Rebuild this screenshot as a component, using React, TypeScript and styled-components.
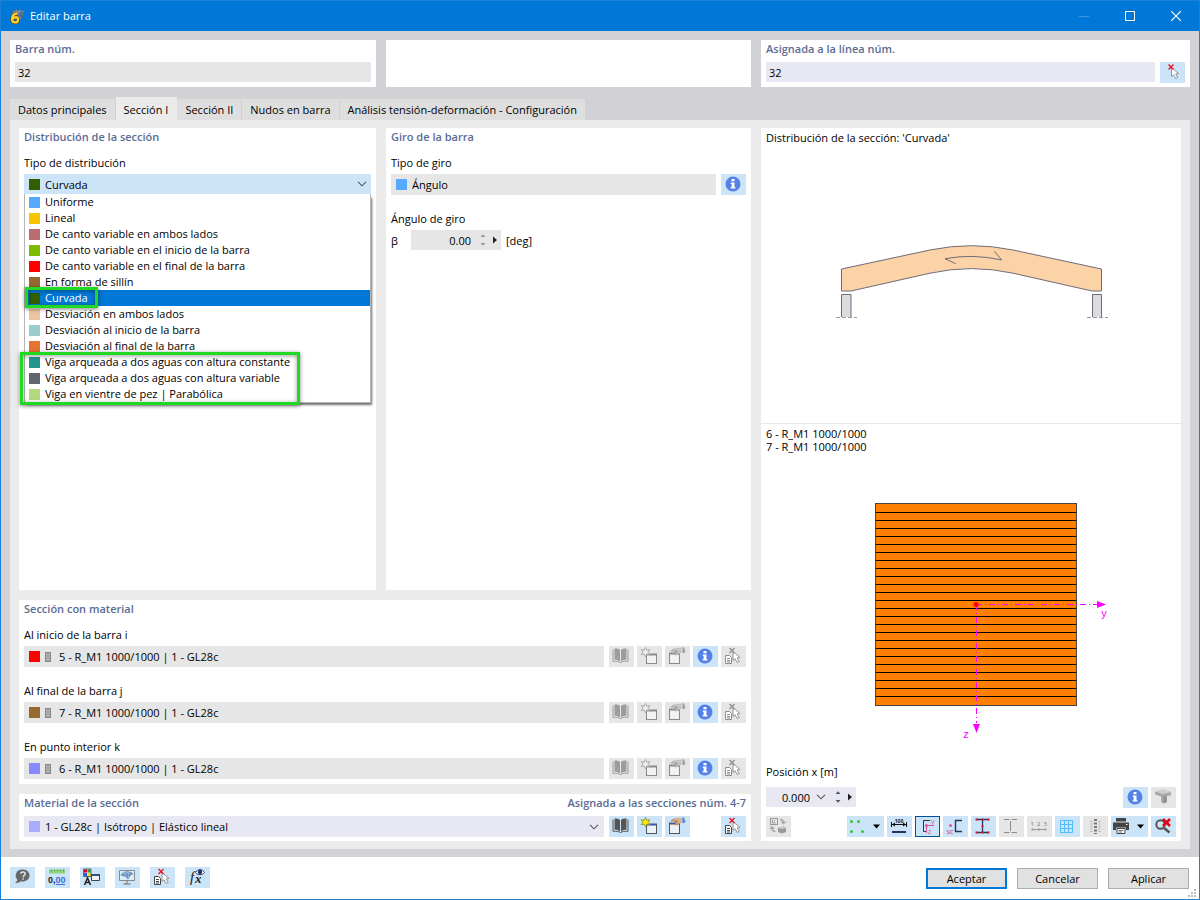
import React from "react";
import styled, { createGlobalStyle } from "styled-components";

const Global = createGlobalStyle`
  *, *::before, *::after { box-sizing: border-box; }
  body { margin: 0; background: #fff; }
  body, button, input, select {
    font-family: "Open Sans", "Noto Sans", sans-serif;
    font-size: 11px;
    color: #000;
  }
  h2, p, ul { margin: 0; padding: 0; }
`;

const Window = styled.div`
  display: flex;
  flex-direction: column;
  min-height: 100vh;
  border: 1px solid #1a7fd6;
  border-top: 0;
  background: #fff;
`;

const TitleBar = styled.header`
  display: flex;
  align-items: center;
  height: 31px;
  padding-left: 7px;
  background: #0078d7;
  border-top: 1px solid #1a84da;
  color: #fff;
`;

const WindowTitle = styled.span`
  flex: 1;
  margin-left: 5px;
  padding-bottom: 2px;
`;

const CaptionButton = styled.button`
  width: 46px;
  height: 30px;
  padding: 0;
  border: 0;
  background: transparent;
  display: flex;
  align-items: center;
  justify-content: center;
`;

const Body = styled.main`
  flex: 1;
  display: flex;
  flex-direction: column;
  padding: 9px 9px 8px;
  background: #d2d1d6;
`;

const HeaderRow = styled.div`
  display: grid;
  grid-template-columns: minmax(0, 366fr) minmax(0, 365fr) minmax(0, 429fr);
  gap: 10px;
`;

const Card = styled.section`
  background: #fff;
  padding: 0 5px 4px;
  min-width: 0;
`;

const CardTitle = styled.h2`
  display: flex;
  justify-content: space-between;
  font-size: 11px;
  font-weight: 600;
  line-height: 18px;
  color: #5b6c94;
  white-space: nowrap;
`;

const Row = styled.div<{ $top?: number }>`
  display: flex;
  align-items: flex-start;
  gap: 3px;
  margin-top: ${(p) => p.$top ?? 2}px;
`;

const Label = styled.label<{ $top?: number }>`
  display: block;
  margin-top: ${(p) => p.$top ?? 8}px;
  line-height: 18px;
`;

const Field = styled.div<{ $tone?: "grey" | "lilac" | "blue" }>`
  position: relative;
  flex: 1;
  min-width: 0;
  display: flex;
  align-items: center;
  gap: 5px;
  height: 21px;
  padding: 0 5px;
  margin-right: 2px;
  background: ${(p) => (p.$tone === "lilac" ? "#e8e8f2" : p.$tone === "blue" ? "#cce4f7" : "#e6e6e6")};
  &:last-child { margin-right: 0; }
`;

const PlainField = styled(Field)`
  height: 20px;
  padding: 0 3px;
`;

const TextInput = styled.input`
  flex: 1;
  min-width: 0;
  height: 20px;
  padding: 0;
  border: 0;
  outline: 0;
  background: transparent;
`;

const SelectInput = styled.select`
  flex: 1;
  min-width: 0;
  height: 20px;
  padding: 0;
  border: 0;
  outline: 0;
  appearance: none;
  background: transparent;
`;

const Swatch = styled.span<{ $color: string }>`
  flex: none;
  width: 11px;
  height: 11px;
  background: ${(p) => p.$color};
`;

const Profile = styled.span`
  flex: none;
  width: 6px;
  height: 10px;
  margin-right: 3px;
  border: 1px solid #8a8a8a;
  background: #a8a8a8;
`;

const ToolButton = styled.button<{ $off?: boolean; $active?: boolean; $wide?: boolean }>`
  flex: none;
  display: flex;
  width: ${(p) => (p.$wide ? 37 : 25)}px;
  height: 21px;
  padding: 0;
  border: 0;
  background: ${(p) => (p.$off ? "#e6e6e6" : "#cce4f7")};
  box-shadow: ${(p) => (p.$active ? "inset 0 0 0 1px #00529b" : "none")};
`;

const Spacer = styled.span<{ $width?: number }>`
  flex: ${(p) => (p.$width ? `0 0 ${p.$width}px` : "1")};
`;

const Tabs = styled.div`
  display: flex;
  align-items: flex-end;
  height: 23px;
  margin-top: 10px;
`;

const Tab = styled.button<{ $selected?: boolean }>`
  height: ${(p) => (p.$selected ? 23 : 21)}px;
  padding: ${(p) => (p.$selected ? "2px 8px 0" : "0 8px")};
  border: 0;
  border-right: 1px solid ${(p) => (p.$selected ? "#ebebeb" : "#d0d0d0")};
  background: ${(p) => (p.$selected ? "#ebebeb" : "#dedede")};
  white-space: nowrap;
`;

const TabPane = styled.div`
  flex: 1;
  display: grid;
  grid-template-columns: minmax(0, 732fr) minmax(420px, 420fr);
  gap: 10px;
  padding: 8px 9px;
  background: #ebebeb;
`;

const LeftColumn = styled.div`
  display: flex;
  flex-direction: column;
  gap: 10px;
  min-width: 0;
`;

const UpperCards = styled.div`
  flex: 1;
  display: grid;
  grid-template-columns: minmax(0, 357fr) minmax(0, 365fr);
  gap: 10px;
  min-height: 300px;
`;

const SectionCard = styled(Card)`
  padding-bottom: 5px;
`;

const Dropdown = styled.div`
  position: relative;
  margin-top: 2px;
`;

const DropdownField = styled(Field)`
  height: 20px;
  margin-right: 0;
  padding-right: 4px;
`;

const OptionList = styled.ul`
  position: absolute;
  z-index: 1;
  top: 20px;
  left: 0;
  right: 0;
  list-style: none;
  border: 1px solid #b5b5b5;
  border-top: 0;
  background: #fff;
  box-shadow: 2px 3px 2px -1px #707070;
`;

const Option = styled.li<{ $selected?: boolean }>`
  display: flex;
  align-items: center;
  gap: 5px;
  height: 16px;
  padding-left: 4px;
  line-height: 16px;
  white-space: nowrap;
  color: ${(p) => (p.$selected ? "#fff" : "#000")};
  background: ${(p) => (p.$selected ? "#0078d7" : "transparent")};
`;

const Highlight = styled.span<{ $x: number; $y: number; $w: number; $h: number }>`
  position: absolute;
  z-index: 2;
  left: ${(p) => p.$x}px;
  top: ${(p) => p.$y}px;
  width: ${(p) => p.$w}px;
  height: ${(p) => p.$h}px;
  border: 3px solid #1fd923;
  box-shadow: 0 1px 4px rgba(0, 0, 0, 0.5), inset 0 1px 4px rgba(0, 0, 0, 0.4);
`;

const AngleRow = styled.div`
  display: flex;
  align-items: center;
  gap: 5px;
  margin-top: 2px;
`;

const Symbol = styled.span`
  width: 15px;
`;

const Spinner = styled.div<{ $tone?: "lilac" }>`
  display: flex;
  align-items: center;
  width: 90px;
  height: 20px;
  background: ${(p) => (p.$tone ? "#e8e8f2" : "#e6e6e6")};
`;

const NumberInput = styled(TextInput)`
  text-align: right;
`;

const PreviewCard = styled(Card)`
  display: flex;
  flex-direction: column;
  padding: 0 0 4px;
`;

const Preview = styled.div`
  display: flex;
  flex-direction: column;
  height: 296px;
  border-bottom: 1px solid #e6e6e6;
`;

const SectionPreview = styled(Preview)`
  flex: 1;
  height: auto;
  min-height: 320px;
  border: 0;
`;

const PreviewText = styled.p`
  padding: 3px 5px 0;
  line-height: 13px;
`;

const Canvas = styled.div<{ $pad: string }>`
  flex: 1;
  display: flex;
  align-items: center;
  justify-content: center;
  padding: ${(p) => p.$pad};
`;

const PreviewTools = styled.div`
  padding: 0 5px;
`;

const Footer = styled.footer`
  position: relative;
  display: flex;
  align-items: flex-start;
  gap: 10px;
  height: 42px;
  padding: 10px 10px 0 9px;
`;

const DialogButtons = styled.div`
  display: flex;
  gap: 10px;
  padding-top: 1px;
`;

const DialogButton = styled.button<{ $primary?: boolean }>`
  width: 81px;
  height: 21px;
  padding: 0;
  border: ${(p) => (p.$primary ? "2px solid #0078d7" : "1px solid #adadad")};
  background: #e1e1e1;
`;

const Grip = styled.svg`
  position: absolute;
  right: 3px;
  bottom: 2px;
`;

const Icon = ({ w = 25, children }: { w?: number; children: React.ReactNode }) => (
  <svg width={w} height="21" viewBox={`0 0 ${w} 21`} fill="none" aria-hidden="true">
    {children}
  </svg>
);

const InfoIcon = () => (
  <Icon>
    <circle cx="12" cy="10" r="7.5" fill="#5580e6" />
    <path d="M10.5 5h3v2.3h-3zM9.8 8.6h3.7v4.6h1v1.4H9.6v-1.4h1V10h-.8z" fill="#fff" />
  </Icon>
);

const BookIcon = ({ off }: { off?: boolean }) => {
  const c = off ? "#9c9c9c" : "#555";
  return (
    <Icon>
      <path d="M5.500 2.500C8 2.300 10 2.800 11 4v11.500c-1.200-1.200-3-1.800-5.500-1.800zM12 4c1-1.200 3-1.700 5.500-1.500v11.200c-2.500 0-4.300.6-5.500 1.800z" fill={c} />
      <path d="M4 3.500v11.800c3.500-.2 5.500.2 7.500 1.200 2-1 4-1.400 7.500-1.200V3.500" stroke={c} />
    </Icon>
  );
};

const NewIcon = ({ off }: { off?: boolean }) => (
  <Icon>
    <rect x="9.500" y="8.500" width="10" height="9" fill={off ? "#f2f2f2" : "#eaf1f8"} stroke={off ? "#8a8a8a" : "#555"} />
    <path d="M9 8.500h11" stroke={off ? "#8a8a8a" : "#555"} strokeWidth="2" />
    {!off && <path d="M11 8.500h8" stroke="#3355dd" />}
    <path d="M8.500 1.500l1.200 2.700 3.300-.4-2.100 2.300 2 2.500-3.200-.4-1.200 2.600-1.200-2.600-3.200.4 2-2.500L4 3.800l3.300.4z" fill={off ? "#eee" : "#ffee00"} stroke={off ? "#9a9a9a" : "#8b8b1d"} strokeWidth=".8" />
  </Icon>
);

const EditIcon = ({ off }: { off?: boolean }) => {
  const line = off ? "#8a8a8a" : "#555";
  return (
    <Icon>
      <rect x="4.500" y="7.500" width="10" height="10" fill={off ? "#f2f2f2" : "#eaf1f8"} stroke={line} />
      <path d="M4 7.500h11" stroke={line} strokeWidth="2" />
      {!off && <path d="M5.500 7.500h4" stroke="#3355dd" />}
      <path d="M5 5l4-2.300 3.500-1h4.500v5l-2.500.8-1 1.500-1.300-.3-1.200 1-1.300-.7.500-2.500-2.500.3-.5-1.300z" fill={off ? "#c4c4c4" : "#dcae8c"} />
      <path d="M6 5l3.500-2M10 9l.8-2.500 2.200-1M12.500 9l1-2M9 5.800l3-1" stroke={off ? "#8f8f8f" : "#7d6149"} strokeWidth=".8" />
      <path d="M17 1.500h2l1.500 4L19 7.200l-2-.7z" fill={off ? "#a0a0a0" : "#5b86d8"} />
      <path d="M17 1.800v4.700" stroke={off ? "#e6e6e6" : "#bcd3f2"} strokeWidth=".8" />
    </Icon>
  );
};

const Cursor = ({ x, y }: { x: number; y: number }) => (
  <path transform={`translate(${x} ${y})`} d="M0 0v9l2.100-1.800L4.200 11l2-1-2-3.600L7 6z" fill="#fff" stroke="#8a8a8a" strokeWidth=".9" />
);

const PickIcon = ({ off }: { off?: boolean }) => (
  <Icon>
    <path d="M4.500 9.500h4l2 2v6h-6z" fill="#fff" stroke={off ? "#8e8e8e" : "#444"} />
    <path d="M6 12.500h3M6 14.500h3M6 16h3" stroke={off ? "#8e8e8e" : "#444"} />
    <Cursor x={12} y={5.500} />
    <path d="M8.500 2l5 5M13.500 2l-5 5" stroke={off ? "#8e8e8e" : "#e81123"} strokeWidth="1.300" />
  </Icon>
);

const PickLineIcon = () => (
  <Icon>
    <Cursor x={11.500} y={5.500} />
    <path d="M8.500 2.500l5 5M13.500 2.500l-5 5" stroke="#e81123" strokeWidth="1.300" />
  </Icon>
);

const Chevron = () => (
  <svg width="10" height="6" viewBox="0 0 10 6" fill="none" aria-hidden="true">
    <path d="M1 .8l4 4 4-4" stroke="#555" strokeWidth="1.100" />
  </svg>
);

const Steps = ({ dark }: { dark?: boolean }) => (
  <svg width="23" height="20" viewBox="0 0 23 20" aria-hidden="true">
    <path d="M2.500 7h5L5 4.200zM2.500 13h5L5 15.800z" fill={dark ? "#555" : "#999"} />
    <path d="M15 6.500v7l4-3.500z" fill="#222" />
  </svg>
);

const Triangle = ({ x }: { x: number }) => <path d={`M${x} 8.500h7l-3.500 4z`} fill="#000" />;

const SwapIcon = () => (
  <Icon>
    <rect x="4.500" y="2.500" width="7" height="6" stroke="#999" />
    <path d="M6.500 4v3h3M8.500 4v1.500" stroke="#999" />
    <path d="M14 3.500c2.500 0 3.500 1 3.500 3.500M15.500 5.500l2 2.200 2-2.200M9.500 15.500c-2.500 0-3.500-1-3.500-4M4 13l2-2.200L8 13" stroke="#aaa" strokeWidth="1.400" />
    <path d="M12 12l5-1.500 3 1.500v4l-4 1.500-4-1.500z" fill="#999" />
    <path d="M12 12l4 1 4-1-3-1.500z" fill="#c9c9c9" />
  </Icon>
);

const PointsIcon = () => (
  <Icon w={37}>
    <g fill="#2fc92f">
      <circle cx="4.500" cy="5.500" r="1.500" /><circle cx="11.500" cy="5.500" r="1.500" />
      <circle cx="4.500" cy="15.500" r="1.500" /><circle cx="15.500" cy="15.500" r="1.500" />
    </g>
    <Triangle x={26} />
  </Icon>
);

const DimensionIcon = () => (
  <Icon>
    <text x="12" y="6.500" textAnchor="middle" fontSize="5" fontWeight="700" fill="#222">100</text>
    <path d="M4.500 6v5M19.500 6v5M5 8.500h14" stroke="#111" />
    <path d="M5 8.500l3-2v4zM19 8.500l-3-2v4z" fill="#111" />
    <path d="M5 16h14" stroke="#25365f" strokeWidth="2" />
  </Icon>
);

const AxesIcon = () => (
  <Icon>
    <path d="M15 4.500H8.500v11H11" stroke="#25365f" />
    <path d="M11.500 17V9.500H19" stroke="#d9569b" />
    <circle cx="11.500" cy="9.500" r="1.500" fill="#d9569b" />
    <text x="16" y="7.500" fontSize="7" fill="#d9569b">y</text>
    <text x="13" y="17.500" fontSize="7" fill="#d9569b">z</text>
  </Icon>
);

const ShearIcon = () => (
  <Icon>
    <path d="M19 4.500h-6.500v11H19" stroke="#25365f" strokeWidth="1.400" />
    <circle cx="7.500" cy="9.500" r="1.500" fill="#d9569b" />
    <text x="3.500" y="17.500" fontSize="6" fontWeight="600" fill="#d04b92">SC</text>
  </Icon>
);

const StressIcon = () => (
  <Icon>
    <path d="M5 3.500h13M5 16.500h13M11.500 3.500v13" stroke="#25365f" strokeWidth="1.300" />
    <path d="M4.500 2.500h2v2h-2zM16.500 2.500h2v2h-2zM10.500 2.500h2v2h-2zM10.500 9h2v2h-2zM4.500 15.500h2v2h-2zM16.500 15.500h2v2h-2zM10.500 15.500h2v2h-2z" fill="#f01020" />
  </Icon>
);

const PartsIcon = () => (
  <Icon>
    <path d="M5 3.500h5.500M12.500 3.500H18M5 16.500h5.500M12.500 16.500H18M11.500 5v10" stroke="#8c8c8c" />
  </Icon>
);

const NumberingIcon = () => (
  <Icon>
    <g fontSize="6" fill="#777">
      <text x="3.500" y="9.500">1</text>
      <text x="10" y="9.500">2</text>
      <text x="16.500" y="9.500">3</text>
    </g>
    <path d="M5 13.500h14" stroke="#999" />
    <path d="M4.500 12.500h2v2h-2zM11 12.500h2v2h-2zM17.500 12.500h2v2h-2z" fill="#999" />
  </Icon>
);

const GridIcon = () => (
  <Icon>
    <path d="M5.500 4.500h12v12h-12zM9.500 4.500v12M13.500 4.500v12M5.500 8.500h12M5.500 12.500h12" stroke="#52bdf7" />
  </Icon>
);

const FibresIcon = () => (
  <Icon>
    <path d="M12.500 3v15" stroke="#777" strokeWidth="3" strokeDasharray="2 1.500" />
    <path d="M8.500 5v12M16.500 5v12" stroke="#b0b0b0" strokeWidth="2" strokeDasharray="1 1.500" />
  </Icon>
);

const PrintIcon = () => (
  <Icon w={37}>
    <path d="M5 2h10v3.500H5zM2 6.500h16V14h-3v-2.500H5V14H2z" fill="#444" />
    <path d="M6 12.500h8v5H6z" fill="#fff" stroke="#444" />
    <path d="M7.500 14.500h5M7.500 16h3.500" stroke="#777" />
    <path d="M15 8.500h1.500" stroke="#fff" />
    <Triangle x={26} />
  </Icon>
);

const ResetZoomIcon = () => (
  <Icon>
    <circle cx="9.500" cy="8.500" r="4.200" stroke="#555" strokeWidth="2" />
    <path d="M13 12l5.500 4.500" stroke="#555" strokeWidth="2.500" />
    <path d="M12 3l7 7M19 3l-7 7" stroke="#e30613" strokeWidth="2.600" />
  </Icon>
);

const BeamIcon = () => (
  <Icon>
    <path d="M4 4.500l8-2 8 2.500v3.500l-4 .5v6l-3 1.500-3-1.500V9.500L4 7.500z" fill="#a9a9a9" />
    <path d="M4 4.500l8-2 8 2.500-8 2z" fill="#cfcfcf" />
    <path d="M12.500 9.500v7l3-1.500V9z" fill="#8d8d8d" />
  </Icon>
);

const HelpIcon = () => (
  <Icon>
    <path d="M13 2.500a6.500 6 0 1 1-2 11.700c-1.500 1.200-3.500 2-6 1.800 1.500-1 2.200-2.200 2.300-3.600A6.500 6 0 0 1 13 2.500z" fill="#666" />
    <path d="M10.800 6.800c.2-2.300 4.400-2.300 4.400.1 0 1.500-2.100 1.500-2.100 3.300M13.100 11.200v1.500" stroke="#d6e8f7" strokeWidth="1.500" />
  </Icon>
);

const UnitsIcon = () => (
  <Icon>
    <path d="M4 2.500h16v4H4z" fill="#8fd47c" />
    <path d="M6.500 2.500v2M9.500 2.500v2M12.500 2.500v2M15.500 2.500v2M18.500 2.500v2" stroke="#5aa847" />
    <text x="3" y="16" fontSize="9" fontWeight="600" fontFamily="Liberation Sans, sans-serif" fill="#222">0,<tspan fill="#3b6fe0">00</tspan></text>
    <path d="M11 17.500h9" stroke="#3b6fe0" />
  </Icon>
);

const DisplayIcon = () => (
  <Icon>
    <path d="M4 2.500h3v3H4z" fill="#e6002e" /><path d="M7.500 2.500h3v3h-3z" fill="#17a82b" />
    <path d="M4 6h3v3H4z" fill="#1e60e0" /><path d="M7.500 6h3v3h-3z" fill="#f2e400" />
    <path d="M3.500 2h7.500v7.500H3.500z" stroke="#333" strokeWidth=".7" />
    <path d="M4.500 18l3-7 3 7M5.500 15.500h4.500M7.500 10v3" stroke="#222" strokeWidth="1.500" />
    <path d="M11.500 7.500h8v6h-8z" fill="#f2f2f2" stroke="#444" />
    <path d="M11 8h9" stroke="#444" strokeWidth="2" />
    <path d="M12.500 8h6" stroke="#3355dd" />
  </Icon>
);

const MonitorIcon = () => (
  <Icon>
    <path d="M4.500 3.500h15v10h-15z" fill="#d9ecfa" stroke="#8a8a8a" />
    <path d="M12 14v3M8.500 17h7" stroke="#8a8a8a" strokeWidth="1.300" />
    <path d="M5.500 8.500c2-5 9-6 13-1.500l-3 1.500-2.500 4-3-3z" fill="#6288b8" />
    <path d="M7 8c3-3 7-3 9.500-.5M9 4.500l3 7M13 4l.5 7" stroke="#b8d0ea" strokeWidth=".7" />
  </Icon>
);

const FormulaIcon = () => (
  <Icon>
    <g fontStyle="italic" fontFamily="Liberation Serif, serif" fill="#222">
      <text x="5" y="15" fontSize="15">f</text>
      <text x="10" y="15.500" fontSize="13" fontWeight="700">x</text>
    </g>
    <path d="M10.500 5.500c2.500-3.800 6.500-3.800 9 0-2.500 3-6.500 3-9 0z" fill="#fff" stroke="#26336b" />
    <circle cx="15" cy="5" r="2.200" fill="#26336b" />
  </Icon>
);

const AppIcon = () => (
  <svg width="17" height="17" viewBox="0 0 17 17" aria-hidden="true">
    <path d="M3 5C5 1 11-.5 16.500 3.500L15.500 7l-2 5.500-3-3z" fill="#46648f" />
    <path d="M5 4c3-1 7 0 10 3M8 1.500l5 9.500M13 2L8 6M4.500 5.500C8 3 12 2.500 16 4" stroke="#8fa5c8" strokeWidth=".7" fill="none" />
    <path d="M9.500 5.500C6 5.500 4 8 4 11c0 4.600 6.200 4.400 6.200.6 0-3-4-3-5.400-.8" stroke="#5c4a08" strokeWidth="3.600" fill="none" />
    <path d="M9.500 5.500C6 5.500 4 8 4 11c0 4.600 6.200 4.400 6.200.6 0-3-4-3-5.400-.8" stroke="#ffcf2e" strokeWidth="2.300" fill="none" />
  </svg>
);

const CurvedBeam = () => (
  <svg width="290" height="90" viewBox="0 0 290 90" role="img" aria-label="Viga curvada">
    <g stroke="#6f6a78" fill="none">
      <path d="M15.500 33L104 14Q145.500 5.400 187 14L275.500 33V55H266L187 37.200Q145.500 28 104 37.200L25 55h-9.500z" fill="#fbd3a7" />
      <path d="M129.700 27.700L119 22.700Q147 17.500 175.700 24L168.300 15.300" />
      <path d="M15.500 81V58.500h9.500V81M266.500 81V58.500h9V81" fill="#dcdbe0" />
      <path d="M10 81.500h21M261 81.500h21" strokeDasharray="4 2" stroke="#999" />
    </g>
  </svg>
);

const lamellae = Array.from({ length: 24 }, (_, i) => 17.5 + i * 8);

const CrossSection = () => (
  <svg width="290" height="250" viewBox="0 0 290 250" role="img" aria-label="Sección transversal">
    <g shapeRendering="crispEdges">
      <rect x="49.500" y="8.500" width="201" height="202" fill="#ff8000" stroke="#444" />
      {lamellae.map((y) => (
        <path key={y} d={`M50 ${y}h200`} stroke="#000" />
      ))}
      <path d="M150 109.500h121M150.500 109v119" stroke="#ff00ff" strokeDasharray="6 3 1 3" />
    </g>
    <path d="M271 106l9 3.500-9 3.500zM147 229l3.500 9 3.500-9z" fill="#ff00ff" />
    <circle cx="150" cy="109.500" r="2.500" fill="#f00" />
    <text x="278" y="122" textAnchor="middle" fontSize="11" fontFamily="Liberation Sans, sans-serif" fill="#ff00ff">y</text>
    <text x="140" y="243" textAnchor="middle" fontSize="11" fontFamily="Liberation Sans, sans-serif" fill="#ff00ff">z</text>
  </svg>
);

const distributions: [string, string][] = [
  ["Uniforme", "#55aaff"],
  ["Lineal", "#f7c600"],
  ["De canto variable en ambos lados", "#b96d70"],
  ["De canto variable en el inicio de la barra", "#7bbb00"],
  ["De canto variable en el final de la barra", "#ff0000"],
  ["En forma de sillín", "#966a2e"],
  ["Curvada", "#335e00"],
  ["Desviación en ambos lados", "#ecc5a0"],
  ["Desviación al inicio de la barra", "#9acccc"],
  ["Desviación al final de la barra", "#e67433"],
  ["Viga arqueada a dos aguas con altura constante", "#23968e"],
  ["Viga arqueada a dos aguas con altura variable", "#62656d"],
  ["Viga en vientre de pez | Parabólica", "#b3d97f"],
];

const sections = [
  { id: "sec-i", label: "Al inicio de la barra i", color: "#ff0000", value: "5 - R_M1 1000/1000 | 1 - GL28c" },
  { id: "sec-j", label: "Al final de la barra j", color: "#966a2e", value: "7 - R_M1 1000/1000 | 1 - GL28c" },
  { id: "sec-k", label: "En punto interior k", color: "#8888ff", value: "6 - R_M1 1000/1000 | 1 - GL28c" },
];

const tabNames = ["Datos principales", "Sección I", "Sección II", "Nudos en barra", "Análisis tensión-deformación - Configuración"];

export default function App() {
  return (
    <Window>
      <Global />
      <TitleBar>
        <AppIcon />
        <WindowTitle>Editar barra</WindowTitle>
        <CaptionButton aria-label="Minimizar">
          <svg width="10" height="10"><path d="M0 5.500h10" stroke="#3c97e0" /></svg>
        </CaptionButton>
        <CaptionButton aria-label="Maximizar">
          <svg width="10" height="10"><path d="M.5.5h9v9h-9z" stroke="#fff" fill="none" /></svg>
        </CaptionButton>
        <CaptionButton aria-label="Cerrar">
          <svg width="10" height="10"><path d="M0 0l10 10M10 0L0 10" stroke="#fff" strokeWidth="1.200" /></svg>
        </CaptionButton>
      </TitleBar>

      <Body>
        <HeaderRow>
          <Card>
            <CardTitle as="label" htmlFor="barra">Barra núm.</CardTitle>
            <Row $top={4}>
              <PlainField><TextInput id="barra" defaultValue="32" /></PlainField>
            </Row>
          </Card>
          <Card />
          <Card>
            <CardTitle as="label" htmlFor="linea">Asignada a la línea núm.</CardTitle>
            <Row $top={4}>
              <PlainField $tone="lilac"><TextInput id="linea" defaultValue="32" /></PlainField>
              <ToolButton aria-label="Seleccionar línea"><PickLineIcon /></ToolButton>
            </Row>
          </Card>
        </HeaderRow>

        <Tabs role="tablist">
          {tabNames.map((name, i) => (
            <Tab key={name} role="tab" aria-selected={i === 1} $selected={i === 1}>{name}</Tab>
          ))}
        </Tabs>

        <TabPane role="tabpanel">
          <LeftColumn>
            <UpperCards>
              <Card>
                <CardTitle>Distribución de la sección</CardTitle>
                <Label htmlFor="distribucion">Tipo de distribución</Label>
                <Dropdown>
                  <DropdownField $tone="blue">
                    <Swatch $color="#335e00" />
                    <SelectInput id="distribucion" defaultValue="Curvada">
                      {distributions.map(([name]) => <option key={name}>{name}</option>)}
                    </SelectInput>
                    <Chevron />
                  </DropdownField>
                  <OptionList role="listbox">
                    {distributions.map(([name, color]) => (
                      <Option key={name} role="option" aria-selected={name === "Curvada"} $selected={name === "Curvada"}>
                        <Swatch $color={color} />
                        {name}
                      </Option>
                    ))}
                  </OptionList>
                  <Highlight $x={1} $y={113} $w={73} $h={21} />
                  <Highlight $x={-4} $y={178} $w={280} $h={53} />
                </Dropdown>
              </Card>
              <Card>
                <CardTitle>Giro de la barra</CardTitle>
                <Label htmlFor="giro">Tipo de giro</Label>
                <Row>
                  <Field>
                    <Swatch $color="#55aaff" />
                    <TextInput id="giro" readOnly value="Ángulo" />
                  </Field>
                  <ToolButton aria-label="Información"><InfoIcon /></ToolButton>
                </Row>
                <Label htmlFor="beta" $top={15}>Ángulo de giro</Label>
                <AngleRow>
                  <Symbol>β</Symbol>
                  <Spinner>
                    <NumberInput id="beta" defaultValue="0.00" />
                    <Spacer $width={7} />
                    <Steps />
                  </Spinner>
                  <span>[deg]</span>
                </AngleRow>
              </Card>
            </UpperCards>

            <SectionCard>
              <CardTitle>Sección con material</CardTitle>
              {sections.map((s, i) => (
                <React.Fragment key={s.id}>
                  <Label htmlFor={s.id} $top={i === 0 ? 8 : 15}>{s.label}</Label>
                  <Row>
                    <Field>
                      <Swatch $color={s.color} />
                      <Profile />
                      <TextInput id={s.id} readOnly value={s.value} />
                    </Field>
                    <ToolButton $off aria-label="Biblioteca"><BookIcon off /></ToolButton>
                    <ToolButton $off aria-label="Nueva sección"><NewIcon off /></ToolButton>
                    <ToolButton $off aria-label="Editar sección"><EditIcon off /></ToolButton>
                    <ToolButton aria-label="Información"><InfoIcon /></ToolButton>
                    <ToolButton $off aria-label="Seleccionar"><PickIcon off /></ToolButton>
                  </Row>
                </React.Fragment>
              ))}
            </SectionCard>

            <Card>
              <CardTitle>
                <label htmlFor="material">Material de la sección</label>
                <span>Asignada a las secciones núm. 4-7</span>
              </CardTitle>
              <Row $top={4}>
                <Field $tone="lilac">
                  <Swatch $color="#aaaaff" />
                  <SelectInput id="material">
                    <option>1 - GL28c | Isótropo | Elástico lineal</option>
                  </SelectInput>
                  <Chevron />
                </Field>
                <ToolButton aria-label="Biblioteca"><BookIcon /></ToolButton>
                <ToolButton aria-label="Nuevo material"><NewIcon /></ToolButton>
                <ToolButton aria-label="Editar material"><EditIcon /></ToolButton>
                <Spacer $width={25} />
                <ToolButton aria-label="Seleccionar"><PickIcon /></ToolButton>
              </Row>
            </Card>
          </LeftColumn>

          <PreviewCard>
            <Preview>
              <PreviewText>Distribución de la sección: 'Curvada'</PreviewText>
              <Canvas $pad="0 0 5px"><CurvedBeam /></Canvas>
            </Preview>
            <SectionPreview>
              <PreviewText>6 - R_M1 1000/1000<br />7 - R_M1 1000/1000</PreviewText>
              <Canvas $pad="23px 0 0"><CrossSection /></Canvas>
            </SectionPreview>
            <PreviewTools>
              <Label htmlFor="posicion" $top={0}>Posición x [m]</Label>
              <Row $top={6}>
                <Spinner $tone="lilac">
                  <NumberInput id="posicion" defaultValue="0.000" />
                  <Spacer $width={6} />
                  <Chevron />
                  <Spacer $width={7} />
                  <Steps dark />
                </Spinner>
                <Spacer />
                <ToolButton aria-label="Información"><InfoIcon /></ToolButton>
                <ToolButton $off aria-label="Vista 3D"><BeamIcon /></ToolButton>
              </Row>
              <Row $top={8}>
                <ToolButton $off aria-label="Intercambiar"><SwapIcon /></ToolButton>
                <Spacer />
                <ToolButton $wide aria-label="Puntos"><PointsIcon /></ToolButton>
                <ToolButton aria-label="Dimensiones"><DimensionIcon /></ToolButton>
                <ToolButton $active aria-label="Ejes principales"><AxesIcon /></ToolButton>
                <ToolButton aria-label="Centro de cortante"><ShearIcon /></ToolButton>
                <ToolButton aria-label="Puntos de tensión"><StressIcon /></ToolButton>
                <ToolButton $off aria-label="Partes"><PartsIcon /></ToolButton>
                <ToolButton $off aria-label="Numeración"><NumberingIcon /></ToolButton>
                <ToolButton aria-label="Cuadrícula"><GridIcon /></ToolButton>
                <ToolButton $off aria-label="Fibras"><FibresIcon /></ToolButton>
                <ToolButton $wide aria-label="Imprimir"><PrintIcon /></ToolButton>
                <ToolButton aria-label="Restablecer vista"><ResetZoomIcon /></ToolButton>
              </Row>
            </PreviewTools>
          </PreviewCard>
        </TabPane>
      </Body>

      <Footer>
        <ToolButton aria-label="Ayuda"><HelpIcon /></ToolButton>
        <ToolButton aria-label="Unidades"><UnitsIcon /></ToolButton>
        <ToolButton aria-label="Visualización"><DisplayIcon /></ToolButton>
        <ToolButton aria-label="Pantalla"><MonitorIcon /></ToolButton>
        <ToolButton aria-label="Seleccionar objeto"><PickIcon /></ToolButton>
        <ToolButton aria-label="Fórmulas"><FormulaIcon /></ToolButton>
        <Spacer />
        <DialogButtons>
          <DialogButton $primary>Aceptar</DialogButton>
          <DialogButton>Cancelar</DialogButton>
          <DialogButton>Aplicar</DialogButton>
        </DialogButtons>
        <Grip width="8" height="8" viewBox="0 0 8 8" aria-hidden="true">
          <path d="M6 0h2v2H6zM3 3h2v2H3zM6 3h2v2H6zM0 6h2v2H0zM3 6h2v2H3zM6 6h2v2H6z" fill="#bfbfbf" />
        </Grip>
      </Footer>
    </Window>
  );
}
